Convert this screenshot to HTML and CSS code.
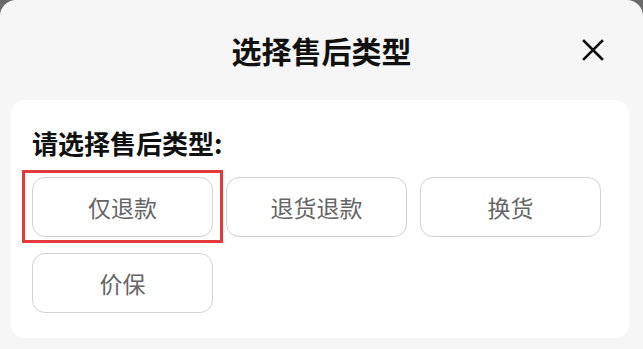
FILE: index.html
```html
<!DOCTYPE html>
<html lang="zh-CN">
<head>
    <meta charset="UTF-8">
    <meta name="viewport" content="width=device-width, initial-scale=1.0">
    <title>选择售后类型</title>
    <link rel="stylesheet" href="styles.css">
</head>
<body>
    <div class="sheet">
        <div class="sheet-header">
            <h1>选择售后类型</h1>
            <button class="close-btn" aria-label="关闭">
                <svg width="22" height="22" viewBox="0 0 22 22">
                    <path d="M2 2 L20 20 M20 2 L2 20" stroke="#111" stroke-width="2.6" stroke-linecap="square" fill="none"/>
                </svg>
            </button>
        </div>

        <div class="type-card">
            <p class="type-label">请选择售后类型:</p>
            <div class="type-list">
                <div class="type-option selected">仅退款</div>
                <div class="type-option">退货退款</div>
                <div class="type-option">换货</div>
                <div class="type-option">价保</div>
            </div>
        </div>
    </div>
</body>
</html>
```

FILE: styles.css
```css
html, body {
    height: 100%;
}

body {
    margin: 0;
    background-color: #6b6b6b;
    font-family: "Noto Sans CJK SC", "Noto Sans", sans-serif;
    color: #111;
}

.sheet {
    height: 100%;
    background-color: #f6f6f6;
    border-radius: 16px 16px 0 0;
    overflow: hidden;
}

.sheet-header {
    position: relative;
    height: 100px;
    display: flex;
    justify-content: center;
    align-items: center;
}

.sheet-header h1 {
    margin: 0;
    font-size: 30px;
    font-weight: 700;
    line-height: 1;
    color: #111;
}

.close-btn {
    position: absolute;
    right: 39px;
    top: 39px;
    padding: 0;
    border: none;
    background: none;
    width: 22px;
    height: 22px;
    cursor: pointer;
}

.close-btn svg {
    display: block;
}

.type-card {
    margin: 0 14px 0 11px;
    background-color: #fff;
    border-radius: 14px;
    padding: 25px 20px 25px 21px;
}

.type-label {
    margin: 0 0 16px;
    font-size: 26px;
    font-weight: 700;
    line-height: 36px;
    color: #111;
}

.type-list {
    display: flex;
    flex-wrap: wrap;
    column-gap: 13px;
    row-gap: 16px;
}

.type-option {
    position: relative;
    box-sizing: border-box;
    width: 181px;
    height: 60px;
    border: 1px solid #d2d2d2;
    border-radius: 13px;
    display: flex;
    justify-content: center;
    align-items: center;
    font-size: 23px;
    color: #666;
}

.type-option.selected::after {
    content: "";
    position: absolute;
    left: -11px;
    right: -11px;
    top: -8px;
    bottom: -7px;
    border: 3px solid #e53a3a;
}
```
